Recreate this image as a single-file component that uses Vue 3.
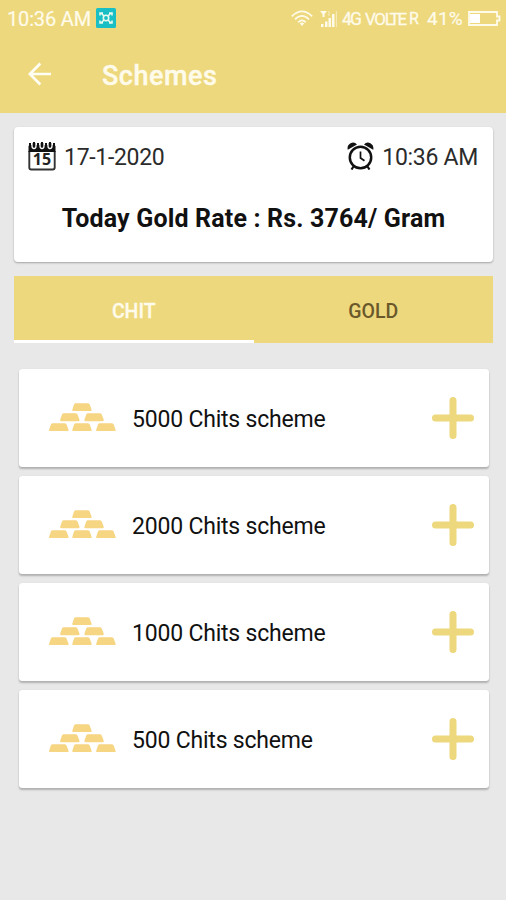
<script setup>
const schemes = ['5000 Chits scheme', '2000 Chits scheme', '1000 Chits scheme', '500 Chits scheme']
const bars = [[23.5, 0], [11.2, 10.3], [35.8, 10.3], [0, 20.3], [23.5, 20.3], [47.8, 20.3]]
</script>

<template>
  <main class="screen">
    <header class="header">
      <div class="status">
        <span class="clock">10:36 AM</span>
        <svg class="app-badge" viewBox="0 0 20 20">
          <rect width="20" height="20" rx="1.5" fill="#19bfc4" />
          <g fill="none" stroke="#e9fbef" stroke-width="1.6">
            <circle cx="10" cy="10" r="2.700" />
            <path d="M4 7.500V5h3M16 7.500V5h-3M4 12.500V15h3M16 12.500V15h-3M5 5l3 3M15 5l-3 3M5 15l3-3M15 15l-3-3" />
          </g>
        </svg>
        <span class="space"></span>
        <svg class="wifi" viewBox="0 0 22 17">
          <g fill="none" stroke="#fffbea" stroke-width="1.7">
            <path d="M.8 6.300Q11-3.600 21.200 6.300M4 9.400Q11 2.500 18 9.400M7.200 12.300Q11 8.600 14.800 12.300" />
          </g>
          <path d="M8.800 13.600Q11 11.500 13.200 13.600L11 16Z" fill="#fffbea" />
        </svg>
        <svg class="signal" viewBox="0 0 18 18">
          <path d="M0 1h7L4.500 4v3h-2V4ZM1 14h2.500v3H1ZM5 11.500h2.500V17H5ZM8.500 8H11v9H8.500ZM12 4h2.500v13H12Z" fill="#fffbea" />
          <path d="M9 1v5M16.500 1v16" stroke="#fffbea" stroke-width="1.200" opacity=".5" />
        </svg>
        <span class="net">4G</span>
        <span class="volte">VO<span class="lte">LTE</span></span>
        <span class="roam">R</span>
        <span class="percent">41%</span>
        <svg class="battery" viewBox="0 0 33 15">
          <path d="M1 1h28v4.500h2.500v4H29V14H1Z" fill="none" stroke="#fffbea" stroke-width="1.800" />
          <path d="M2 3h10v9H2Z" fill="#fff" />
        </svg>
      </div>
      <div class="toolbar">
        <svg class="back" viewBox="0 0 24 24">
          <path d="M23 12H2M12.300 1.500L1.800 12l10.500 10.500" fill="none" stroke="#fffef5" stroke-width="2.700" />
        </svg>
        <h1 class="title">Schemes</h1>
      </div>
    </header>

    <section class="rate-card">
      <div class="when">
        <svg class="calendar" viewBox="0 0 28 29">
          <path d="M1.300 9V25.500q0 2 2 2h21.400q2 0 2-2V9" fill="#fff" stroke="#333" stroke-width="1.900" />
          <path d="M.5 10V4.500q0-1.500 1.500-1.500h24q1.500 0 1.500 1.500V10Z" fill="#111" />
          <g fill="#111" stroke="#fff" stroke-width="1.300">
            <path d="M4 1v3q0 2.500 2 2.500T8 4V1M12 1v3q0 2.500 2 2.500T16 4V1M20 1v3q0 2.500 2 2.500T24 4V1" />
          </g>
          <path d="M5 0h2v4H5ZM13 0h2v4h-2ZM21 0h2v4h-2ZM1 1h2v3H1ZM9 1h2v3H9ZM17 1h2v3h-2ZM25 1h2v3h-2Z" fill="#111" />
          <text x="14" y="23.300" text-anchor="middle" class="day">15</text>
        </svg>
        <span class="date">17-1-2020</span>
        <span class="space"></span>
        <svg class="alarm" viewBox="0 0 27 28">
          <path d="M.8 7.800Q-.3 3.400 3.600 1.300Q7.300-.6 10 2.500ZM26.200 7.800Q27.300 3.400 23.400 1.300Q19.700-.6 17 2.500Z" fill="#111" />
          <circle cx="13.500" cy="15.500" r="10.700" fill="#fff" stroke="#111" stroke-width="2.500" />
          <path d="M13.500 9.500v6.500l4 2.800" fill="none" stroke="#111" stroke-width="1.700" />
          <path d="M6.500 24.500l-2 3M20.500 24.500l2 3" stroke="#111" stroke-width="2.200" />
        </svg>
        <span class="time">10:36 AM</span>
      </div>
      <p class="rate">Today Gold Rate : Rs. 3764/ Gram</p>
    </section>

    <nav class="tabs">
      <span class="tab active"><span>CHIT</span></span>
      <span class="tab"><span>GOLD</span></span>
    </nav>

    <section class="list">
      <article v-for="name in schemes" :key="name" class="scheme">
        <svg class="gold" viewBox="0 0 68 29">
          <path
            v-for="(b, i) in bars"
            :key="i"
            :transform="`translate(${b[0]} ${b[1]})`"
            d="M3.800 0h12q1.300 0 1.900 1.100l2 5.200q.6 1.700-1 1.700H1.200q-1.600 0-1-1.700L2 1.100Q2.500 0 3.800 0Z"
            fill="#f6d583"
          />
        </svg>
        <span class="name">{{ name }}</span>
        <svg class="plus" viewBox="0 0 42 42">
          <path d="M21 3.500v35M3.500 21h35" stroke="#edd87d" stroke-width="7" stroke-linecap="round" />
        </svg>
      </article>
    </section>
  </main>
</template>

<style>
body {
  margin: 0;
  background: #e8e8e8;
}
</style>

<style scoped>
.screen {
  box-sizing: border-box;
  width: 506px;
  height: 900px;
  background: #e8e8e8;
  font-family: Roboto, "Liberation Sans", sans-serif;
  color: #111;
  white-space: nowrap;
}
svg {
  display: block;
  flex: none;
}
.header {
  height: 113px;
  background: #edd87d;
  color: #fffbea;
}
.status {
  height: 37px;
  display: flex;
  align-items: center;
  padding: 0 5px 0 7px;
}
.clock {
  width: 89px;
  font-size: 20px;
  letter-spacing: -0.15px;
  -webkit-text-stroke: 0.2px;
}
.app-badge {
  width: 20px;
  height: 20px;
  margin-bottom: 1px;
}
.space {
  flex: 1;
}
.wifi {
  width: 22px;
  height: 17px;
  margin: 0 7px 1px 0;
}
.signal {
  width: 18px;
  height: 18px;
  margin-right: 4px;
}
.net {
  width: 23px;
  font-size: 17.5px;
  letter-spacing: -1.9px;
  -webkit-text-stroke: 0.3px;
}
.volte {
  width: 44px;
  font-size: 17px;
  letter-spacing: -1.4px;
  -webkit-text-stroke: 0.3px;
}
.lte {
  letter-spacing: -2.1px;
}
.roam {
  width: 18px;
  font-size: 16px;
  -webkit-text-stroke: 0.3px;
}
.percent {
  width: 41px;
  font-size: 19px;
  letter-spacing: 0.2px;
  -webkit-text-stroke: 0.2px;
}
.battery {
  width: 33px;
  height: 15px;
  margin-bottom: 1px;
}
.toolbar {
  height: 76px;
  display: flex;
  align-items: center;
  padding-left: 28px;
}
.back {
  width: 24px;
  height: 24px;
  margin-bottom: 3px;
}
.title {
  margin: 2px 0 0 50px;
  font-size: 27px;
  font-weight: 500;
  letter-spacing: 0.5px;
  -webkit-text-stroke: 0.4px;
}
.rate-card {
  height: 135px;
  margin: 14px 13px 0 14px;
  background: #fff;
  border-radius: 4px;
  box-shadow: 0 1px 2px rgba(0, 0, 0, 0.3);
}
.when {
  height: 60px;
  padding: 0 15px;
  display: flex;
  align-items: center;
  font-size: 23px;
}
.calendar {
  width: 28px;
  height: 29px;
  margin: 0 8px 2px -1px;
}
.day {
  font: 700 16px "Noto Sans", sans-serif;
  fill: #222;
}
.date,
.time {
  color: #2b2b2b;
  letter-spacing: -0.3px;
}
.alarm {
  width: 27px;
  height: 28px;
  margin: 0 8px 2px 0;
}
.rate {
  margin: 0;
  line-height: 63px;
  text-align: center;
  font-size: 25px;
  font-weight: 700;
  letter-spacing: 0.16px;
}
.tabs {
  height: 67px;
  margin: 14px 13px 0 14px;
  display: flex;
  background: #edd87d;
}
.tab {
  flex: 1;
  box-sizing: border-box;
  padding-top: 6px;
  border-bottom: 3px solid transparent;
  display: flex;
  align-items: center;
  justify-content: center;
  font-size: 19.5px;
  font-weight: 500;
  color: #6a582b;
}
.active {
  color: #fffbea;
  border-bottom-color: #fff;
  -webkit-text-stroke: 0.3px;
}
.list {
  display: grid;
  gap: 9px;
  padding: 26px 17px 0 19px;
}
.scheme {
  height: 98px;
  box-sizing: border-box;
  padding: 0 15px 0 30px;
  display: flex;
  align-items: center;
  background: #fff;
  border-radius: 3px;
  box-shadow: 0 2px 2px rgba(0, 0, 0, 0.24), 0 0 1px rgba(0, 0, 0, 0.12);
}
.gold {
  width: 67px;
  height: 29px;
  margin: 0 16px 1px 0;
}
.name {
  flex: 1;
  margin-top: 2px;
  font-size: 23px;
  letter-spacing: -0.2px;
}
.plus {
  width: 42px;
  height: 42px;
  margin-bottom: 1px;
}
</style>
